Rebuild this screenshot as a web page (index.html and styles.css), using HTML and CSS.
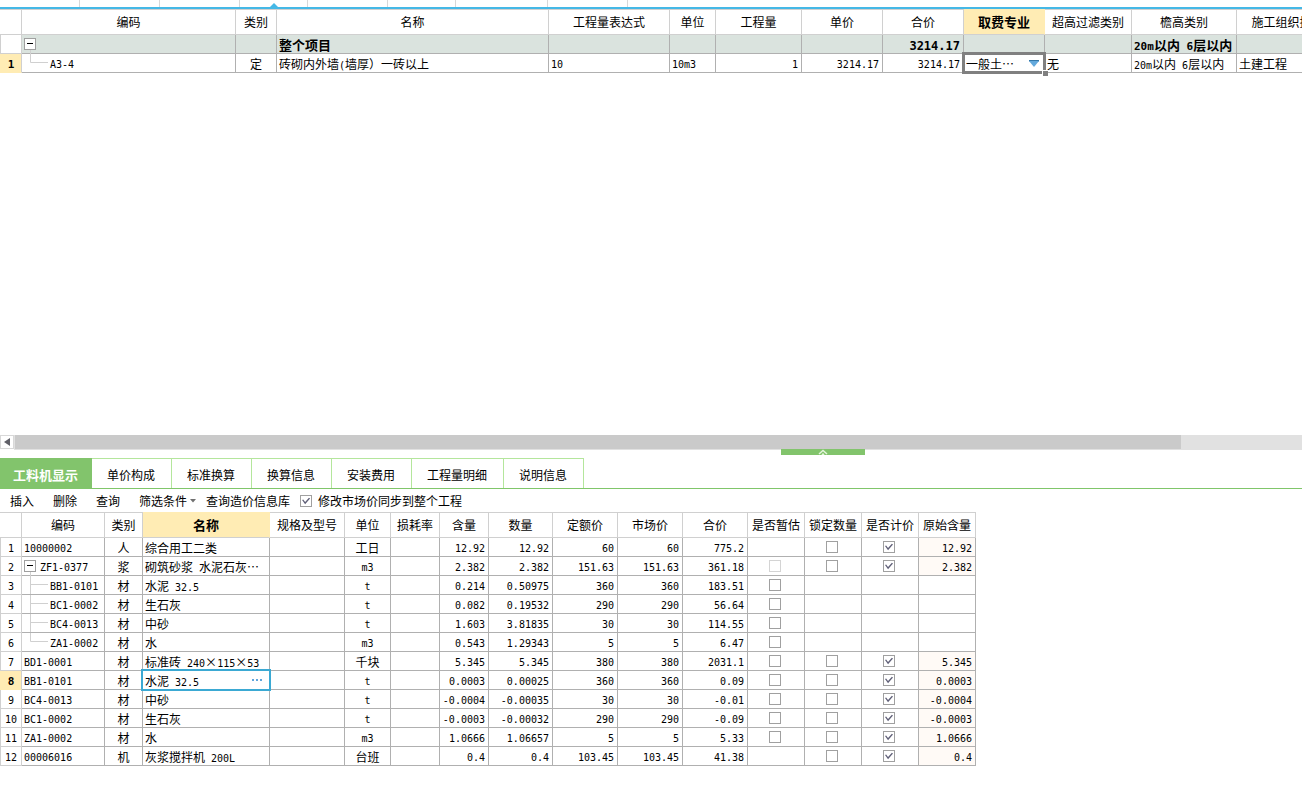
FILE: index.html
```html
<!DOCTYPE html>
<html lang="zh-CN">
<head>
<meta charset="utf-8">
<title>工料机显示</title>
<link rel="stylesheet" href="styles.css">
</head>
<body>
<main class="upper">
  <div class="strip">
    <span class="w80"></span><span class="w80"></span><span class="w80"></span><span class="w68 active"></span><span class="w80"></span><span class="w68"></span><span class="w92"></span><span class="w80"></span>
  </div>
  <table class="grid items">
    <colgroup><col class="c22"><col class="c214"><col class="c41"><col class="c272"><col class="c121"><col class="c46"><col class="c86"><col class="c81"><col class="c81"><col class="c81"><col class="c87"><col class="c105"><col class="c126"></colgroup>
    <thead>
      <tr><th></th><th>编码</th><th>类别</th><th>名称</th><th>工程量表达式</th><th>单位</th><th>工程量</th><th>单价</th><th>合价</th><th class="current">取费专业</th><th>超高过滤类别</th><th>檐高类别</th><th>施工组织措施类别</th></tr>
    </thead>
    <tbody>
      <tr class="group"><th></th><td><div class="tree"><button class="toggle" aria-label="折叠"></button></div></td><td></td><td>整个项目</td><td></td><td></td><td></td><td></td><td class="n r">3214.17</td><td></td><td></td><td><span class="m">20m</span>以内<span class="m"> 6</span>层以内</td><td></td></tr>
      <tr><th class="current">1</th><td><div class="tree"><svg class="branch" width="18" height="18"><path d="M.5 0V8.5H18"/></svg><span class="m">A3-4</span></div></td><td class="c">定</td><td>砖砌内外墙<span class="m">(</span>墙厚）一砖以上</td><td class="n">10</td><td class="n">10m3</td><td class="n r">1</td><td class="n r">3214.17</td><td class="n r">3214.17</td>
        <td class="pick"><div class="picker"><select aria-label="取费专业"><option>一般土…</option></select><svg width="10" height="7"><path class="lip" d="M0 0H10V1.500H0Z"/><path class="drop" d="M0 1L5 7L10 1Z"/></svg></div></td>
        <td>无</td><td><span class="m">20m</span>以内<span class="m"> 6</span>层以内</td><td>土建工程</td></tr>
    </tbody>
  </table>
</main>
<div class="scroller">
  <button aria-label="向左滚动"><svg width="6" height="8"><path d="M6 0V8L0 4Z"/></svg></button>
  <div class="track"><div class="thumb"></div></div>
</div>
<div class="splitter"><button aria-label="收起"><svg width="12" height="6"><path d="M2 5L6 1.500L10 5M5 6L6 5L7 6"/></svg></button></div>
<section class="lower">
  <nav class="tabs">
    <button class="tab on">工料机显示</button><button class="tab">单价构成</button><button class="tab">标准换算</button><button class="tab">换算信息</button><button class="tab">安装费用</button><button class="tab">工程量明细</button><button class="tab">说明信息</button>
  </nav>
  <div class="tools">
    <button>插入</button><button>删除</button><button>查询</button>
    <div class="tail">
      <button>筛选条件<svg width="6" height="4"><path d="M0 0H6L3 3.500Z"/></svg></button>
      <button>查询造价信息库</button>
      <label><input type="checkbox" checked>修改市场价同步到整个工程</label>
    </div>
  </div>
  <table class="grid detail">
    <colgroup><col class="c22"><col class="c83"><col class="c38"><col class="c127"><col class="c75"><col class="c46"><col class="c49"><col class="c49"><col class="c64"><col class="c65"><col class="c65"><col class="c65"><col class="c57"><col class="c57"><col class="c57"><col class="c57"></colgroup>
    <thead>
      <tr><th></th><th>编码</th><th>类别</th><th class="current">名称</th><th>规格及型号</th><th>单位</th><th>损耗率</th><th>含量</th><th>数量</th><th>定额价</th><th>市场价</th><th>合价</th><th>是否暂估</th><th>锁定数量</th><th>是否计价</th><th>原始含量</th></tr>
    </thead>
    <tbody>
      <tr><th>1</th><td class="n">10000002</td><td class="c">人</td><td>综合用工二类</td><td></td><td class="c">工日</td><td></td><td class="n r">12.92</td><td class="n r">12.92</td><td class="n r">60</td><td class="n r">60</td><td class="n r">775.2</td><td></td><td class="k"><input type="checkbox" aria-label="锁定数量"></td><td class="k"><input type="checkbox" aria-label="是否计价" checked></td><td class="n r origin">12.92</td></tr>
      <tr><th>2</th><td><div class="tree"><button class="toggle" aria-label="折叠"></button><span class="m">ZF1-0377</span></div></td><td class="c">浆</td><td>砌筑砂浆<span class="m"> </span>水泥石灰…</td><td></td><td class="n c">m3</td><td></td><td class="n r">2.382</td><td class="n r">2.382</td><td class="n r">151.63</td><td class="n r">151.63</td><td class="n r">361.18</td><td class="k"><input type="checkbox" aria-label="是否暂估" disabled></td><td class="k"><input type="checkbox" aria-label="锁定数量"></td><td class="k"><input type="checkbox" aria-label="是否计价" checked></td><td class="n r origin">2.382</td></tr>
      <tr><th>3</th><td><div class="tree"><svg class="branch" width="18" height="18"><path d="M.5 0V18M0 8.500H18"/></svg><span class="m">BB1-0101</span></div></td><td class="c">材</td><td>水泥<span class="m"> 32.5</span></td><td></td><td class="n c">t</td><td></td><td class="n r">0.214</td><td class="n r">0.50975</td><td class="n r">360</td><td class="n r">360</td><td class="n r">183.51</td><td class="k"><input type="checkbox" aria-label="是否暂估"></td><td></td><td></td><td></td></tr>
      <tr><th>4</th><td><div class="tree"><svg class="branch" width="18" height="18"><path d="M.5 0V18M0 8.500H18"/></svg><span class="m">BC1-0002</span></div></td><td class="c">材</td><td>生石灰</td><td></td><td class="n c">t</td><td></td><td class="n r">0.082</td><td class="n r">0.19532</td><td class="n r">290</td><td class="n r">290</td><td class="n r">56.64</td><td class="k"><input type="checkbox" aria-label="是否暂估"></td><td></td><td></td><td></td></tr>
      <tr><th>5</th><td><div class="tree"><svg class="branch" width="18" height="18"><path d="M.5 0V18M0 8.500H18"/></svg><span class="m">BC4-0013</span></div></td><td class="c">材</td><td>中砂</td><td></td><td class="n c">t</td><td></td><td class="n r">1.603</td><td class="n r">3.81835</td><td class="n r">30</td><td class="n r">30</td><td class="n r">114.55</td><td class="k"><input type="checkbox" aria-label="是否暂估"></td><td></td><td></td><td></td></tr>
      <tr><th>6</th><td><div class="tree"><svg class="branch" width="18" height="18"><path d="M.5 0V8.500H18"/></svg><span class="m">ZA1-0002</span></div></td><td class="c">材</td><td>水</td><td></td><td class="n c">m3</td><td></td><td class="n r">0.543</td><td class="n r">1.29343</td><td class="n r">5</td><td class="n r">5</td><td class="n r">6.47</td><td class="k"><input type="checkbox" aria-label="是否暂估"></td><td></td><td></td><td></td></tr>
      <tr><th>7</th><td class="n">BD1-0001</td><td class="c">材</td><td>标准砖<span class="m"> 240</span>×<span class="m">115</span>×<span class="m">53</span></td><td></td><td class="c">千块</td><td></td><td class="n r">5.345</td><td class="n r">5.345</td><td class="n r">380</td><td class="n r">380</td><td class="n r">2031.1</td><td class="k"><input type="checkbox" aria-label="是否暂估"></td><td class="k"><input type="checkbox" aria-label="锁定数量"></td><td class="k"><input type="checkbox" aria-label="是否计价" checked></td><td class="n r origin">5.345</td></tr>
      <tr><th class="current">8</th><td class="n">BB1-0101</td><td class="c">材</td><td class="edit"><div class="editor"><span>水泥<span class="m"> 32.5</span></span><button aria-label="选择名称"><svg width="10" height="2"><path d="M0 0H2V2H0ZM4 0H6V2H4ZM8 0H10V2H8Z"/></svg></button></div></td><td></td><td class="n c">t</td><td></td><td class="n r">0.0003</td><td class="n r">0.00025</td><td class="n r">360</td><td class="n r">360</td><td class="n r">0.09</td><td class="k"><input type="checkbox" aria-label="是否暂估"></td><td class="k"><input type="checkbox" aria-label="锁定数量"></td><td class="k"><input type="checkbox" aria-label="是否计价" checked></td><td class="n r origin">0.0003</td></tr>
      <tr><th>9</th><td class="n">BC4-0013</td><td class="c">材</td><td>中砂</td><td></td><td class="n c">t</td><td></td><td class="n r">-0.0004</td><td class="n r">-0.00035</td><td class="n r">30</td><td class="n r">30</td><td class="n r">-0.01</td><td class="k"><input type="checkbox" aria-label="是否暂估"></td><td class="k"><input type="checkbox" aria-label="锁定数量"></td><td class="k"><input type="checkbox" aria-label="是否计价" checked></td><td class="n r origin">-0.0004</td></tr>
      <tr><th>10</th><td class="n">BC1-0002</td><td class="c">材</td><td>生石灰</td><td></td><td class="n c">t</td><td></td><td class="n r">-0.0003</td><td class="n r">-0.00032</td><td class="n r">290</td><td class="n r">290</td><td class="n r">-0.09</td><td class="k"><input type="checkbox" aria-label="是否暂估"></td><td class="k"><input type="checkbox" aria-label="锁定数量"></td><td class="k"><input type="checkbox" aria-label="是否计价" checked></td><td class="n r origin">-0.0003</td></tr>
      <tr><th>11</th><td class="n">ZA1-0002</td><td class="c">材</td><td>水</td><td></td><td class="n c">m3</td><td></td><td class="n r">1.0666</td><td class="n r">1.06657</td><td class="n r">5</td><td class="n r">5</td><td class="n r">5.33</td><td class="k"><input type="checkbox" aria-label="是否暂估"></td><td class="k"><input type="checkbox" aria-label="锁定数量"></td><td class="k"><input type="checkbox" aria-label="是否计价" checked></td><td class="n r origin">1.0666</td></tr>
      <tr><th>12</th><td class="n">00006016</td><td class="c">机</td><td>灰浆搅拌机<span class="m"> 200L</span></td><td></td><td class="c">台班</td><td></td><td class="n r">0.4</td><td class="n r">0.4</td><td class="n r">103.45</td><td class="n r">103.45</td><td class="n r">41.38</td><td></td><td class="k"><input type="checkbox" aria-label="锁定数量"></td><td class="k"><input type="checkbox" aria-label="是否计价" checked></td><td class="n r origin">0.4</td></tr>
    </tbody>
  </table>
</section>
</body>
</html>
```

FILE: styles.css
```css
* { box-sizing: border-box; }

body {
  margin: 0;
  min-height: 100vh;
  display: flex;
  flex-direction: column;
  overflow-x: hidden;
  background: #fff;
  color: #000;
  font: 12px/18px "Noto Sans CJK SC", sans-serif;
}

button, select {
  margin: 0;
  padding: 0;
  border: 0;
  border-radius: 0;
  background: none;
  color: inherit;
  font: inherit;
}

svg { display: block; flex: none; }

.m { font: 10px/10px "DejaVu Sans Mono", monospace; white-space: pre; }

/* Upper pane */
.upper { flex: 1; overflow: hidden; }

.strip { display: flex; height: 9px; border-bottom: 2px solid #45b8e6; }
.strip span { border-right: 1px solid #d8d8d8; }
.strip .active { position: relative; }
.strip .active::after {
  content: "";
  position: absolute;
  left: 50%;
  bottom: 0;
  margin-left: -4px;
  border: 4px solid transparent;
  border-top: 0;
  border-bottom-color: #45b8e6;
}
.w68 { width: 68px; }
.w80 { width: 80px; }
.w92 { width: 92px; }

/* Grids */
.grid { table-layout: fixed; border-collapse: separate; border-spacing: 0; }
.items { width: 1363px; }
.detail { width: 976px; }

.c22 { width: 22px; }
.c38 { width: 38px; }
.c41 { width: 41px; }
.c46 { width: 46px; }
.c49 { width: 49px; }
.c57 { width: 57px; }
.c64 { width: 64px; }
.c65 { width: 65px; }
.c75 { width: 75px; }
.c81 { width: 81px; }
.c83 { width: 83px; }
.c86 { width: 86px; }
.c87 { width: 87px; }
.c105 { width: 105px; }
.c121 { width: 121px; }
.c126 { width: 126px; }
.c127 { width: 127px; }
.c214 { width: 214px; }
.c272 { width: 272px; }

.grid th, .grid td {
  height: 19px;
  padding: 2px 0 0;
  border: 0 solid #b0b0b0;
  border-width: 0 1px 1px 0;
  line-height: 16px;
  white-space: nowrap;
}
.grid td { padding: 2px 2px 0; }
.grid th { border-color: #d0d0d0; font-weight: normal; }
.grid thead th { height: 26px; padding-top: 0; border-top-width: 1px; line-height: 24px; }
.grid tbody th { padding-top: 4px; border-left-width: 1px; font: 10px/14px "DejaVu Sans Mono", monospace; }
.grid thead .current { background: #ffecb4; border-top-color: #ffecb4; border-right-color: #ffecb4; font-size: 13px; font-weight: bold; }
.grid tbody .current { background: #ffecb4; border-left-color: #ffecb4; border-bottom-color: #ffecb4; font-size: 11px; font-weight: bold; }

.grid .n { padding-top: 4px; font: 10px/14px "DejaVu Sans Mono", monospace; }
.grid .c { text-align: center; }
.grid .r { padding-right: 3px; text-align: right; }
.grid .k { padding: 0 2px 0 0; }
.grid .origin { background: #fffaf6; }

.grid .group td { background: #dae3de; font-size: 13px; font-weight: bold; }
.grid .group .n { font-size: 12px; }
.group .m { font-size: 11px; font-weight: bold; }

/* Tree column */
.tree { display: flex; align-items: center; height: 18px; margin-top: -2px; }
.tree .m { padding-top: 3px; }
.toggle {
  position: relative;
  flex: none;
  width: 12px;
  height: 12px;
  margin-right: 4px;
  border: 1px solid #a0a0a0;
  background: linear-gradient(#000, #000) 2px 4px / 6px 1px no-repeat #fff;
}
.toggle::after {
  content: "";
  position: absolute;
  left: 5px;
  top: 11px;
  height: 4px;
  border-left: 1px solid #d0d0d0;
}
.branch { margin: 0 2px 0 6px; fill: none; stroke: #d0d0d0; }

/* Cell editors */
.grid .pick, .grid .edit { padding: 0; }
.picker {
  position: relative;
  display: flex;
  align-items: center;
  height: 18px;
  padding: 0 5px 0 2px;
  outline: 3px solid #808080;
  outline-offset: -1px;
  background: #fff;
}
.picker::after {
  content: "";
  position: absolute;
  right: -4px;
  bottom: -4px;
  width: 5px;
  height: 5px;
  border: 0 solid #fff;
  border-width: 1px 0 0 1px;
  background: #808080;
}
.picker select { flex: 1; min-width: 0; height: 18px; padding-top: 2px; appearance: none; outline: 0; }
.lip { fill: #3377a8; }
.drop { fill: #63a9dc; }

.editor {
  position: relative;
  display: flex;
  align-items: center;
  justify-content: space-between;
  height: 18px;
  padding: 0 7px 0 2px;
  outline: 2px solid #3ba9d3;
  background: #fff;
}
.editor > span { padding-top: 2px; }
.editor button { height: 18px; }
.editor path { fill: #5fa5dc; }

/* Tick boxes */
input[type="checkbox"] {
  appearance: none;
  display: block;
  flex: none;
  width: 12px;
  height: 12px;
  margin: 0;
  border: 1px solid #a0a0a0;
  background: #fff;
}
input[type="checkbox"]:checked::after {
  content: "";
  display: block;
  width: 8px;
  height: 8px;
  margin: 1px;
  background: #606078;
  clip-path: polygon(0 38%, 14% 32%, 38% 62%, 86% 8%, 100% 18%, 38% 90%);
}
input[type="checkbox"]:disabled { border-color: #d4d4d4; }
.k input[type="checkbox"] { margin: 0 auto; }

/* Scroll bar and splitter */
.scroller { display: flex; height: 15px; }
.scroller button {
  display: grid;
  place-items: center;
  width: 14px;
  height: 14px;
  border: 1px solid #d8d8d8;
}
.scroller path { fill: #606068; }
.track { flex: 1; background: #e1e1e1; }
.thumb { width: 90.5%; height: 14px; margin-left: 1px; background: #cacaca; }
.splitter { height: 8px; }
.splitter button {
  display: flex;
  justify-content: center;
  width: 84px;
  height: 6px;
  margin: -1px 0 0 60%;
  background: #82c46c;
}
.splitter path { fill: none; stroke: #e4f5dc; stroke-width: 1.500; }

/* Lower pane */
.lower { padding-bottom: 22px; }
.tabs { display: flex; border-bottom: 1px solid #80c66a; }
.tab {
  height: 30px;
  padding: 3px 16px 0 15px;
  border: 1px solid #b4e69c;
  border-width: 1px 1px 0 0;
}
.tab.on {
  padding: 3px 14px 0 13px;
  border-width: 0;
  background: #82c46c;
  color: #fff;
  font-size: 13px;
  font-weight: bold;
}

.tools, .tail, .tools label { display: flex; align-items: center; }
.tools { gap: 19px; height: 23px; padding: 1px 10px 0; }
.tail { gap: 10px; }
.tools label { gap: 6px; }
.tools button { display: flex; align-items: center; gap: 3px; height: 22px; }
.tools path { fill: #707070; }
```
